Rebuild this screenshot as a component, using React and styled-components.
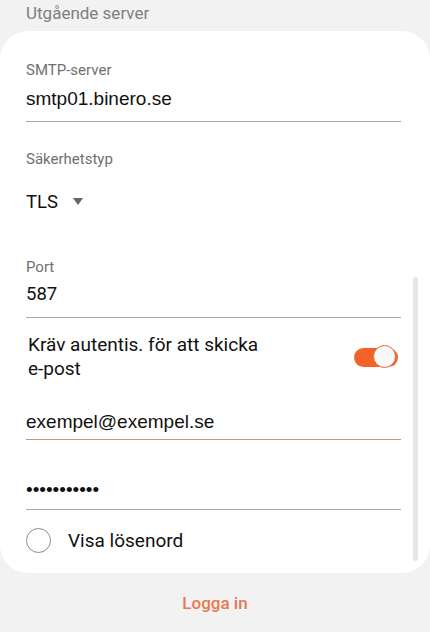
import React, { useState } from 'react';
import styled, { createGlobalStyle } from 'styled-components';

const GlobalStyle = createGlobalStyle`
    html, body {
        margin: 0;
        padding: 0;
        background: #f2f2f2;
    }
    body {
        font-family: Roboto, "Liberation Sans", sans-serif;
        -webkit-font-smoothing: antialiased;
    }
`;

const Page = styled.div`
    width: 430px;
    height: 632px;
    padding-top: 3px;
    box-sizing: border-box;
    background: #f2f2f2;
    overflow: hidden;
`;

const SectionTitle = styled.div`
    padding-left: 26px;
    font-size: 17px;
    line-height: 20px;
    color: #7f7f7f;
`;

const Card = styled.div`
    position: relative;
    margin-top: 8px;
    background: #fff;
    border-radius: 28px;
    padding: 29px 29px 20px 26px;
`;

const Label = styled.div`
    font-size: 15px;
    line-height: 20px;
    color: #707070;
    margin-top: ${({ top }) => top || 0}px;
`;

const Field = styled.div`
    margin-top: ${({ top }) => top || 0}px;
    padding-bottom: ${({ bottom }) => bottom || 0}px;
    border-bottom: 1px solid ${({ focused }) => (focused ? '#c4957a' : '#a8a8a8')};
    font-family: ${({ arial }) => (arial ? '"Liberation Sans", Arial, sans-serif' : 'Roboto, sans-serif')};
    font-size: ${({ arial }) => (arial ? '19px' : '18.5px')};
    line-height: 26px;
    color: #111;
`;

const Select = styled.div`
    margin-top: ${({ top }) => top || 0}px;
    display: flex;
    align-items: center;
    gap: 15px;
    font-size: 18.5px;
    line-height: 26px;
    color: #111;
`;

const SwitchRow = styled.div`
    margin-top: 15px;
    display: flex;
    align-items: center;
    justify-content: space-between;
`;

const SwitchText = styled.div`
    width: 250px;
    font-size: 19px;
    line-height: 24px;
    color: #111;
    padding-left: 2px;
`;

const Track = styled.button`
    position: relative;
    width: 44px;
    height: 19px;
    margin-right: 3px;
    padding: 0;
    border: none;
    border-radius: 10px;
    background: ${({ on }) => (on ? '#f4622a' : '#bdbdbd')};
    cursor: pointer;
`;

const Thumb = styled.span`
    position: absolute;
    top: -3px;
    left: ${({ on }) => (on ? '19px' : '0')};
    width: 23px;
    height: 23px;
    box-sizing: border-box;
    border-radius: 50%;
    background: #f9f9f9;
    border: 1.5px solid ${({ on }) => (on ? '#e5683a' : '#9a9a9a')};
`;

const CheckRow = styled.label`
    margin-top: 18px;
    display: flex;
    align-items: center;
    gap: 17px;
    font-size: 19px;
    line-height: 24px;
    color: #111;
    cursor: pointer;
`;

const Radio = styled.span`
    width: 25px;
    height: 25px;
    box-sizing: border-box;
    border-radius: 50%;
    border: 1px solid #8c8c8c;
    background: ${({ checked }) => (checked ? '#f4622a' : '#fff')};
`;

const Scrollbar = styled.div`
    position: absolute;
    right: 12px;
    top: 246px;
    width: 5px;
    height: 284px;
    border-radius: 3px;
    background: #e6e6e6;
`;

const LoginButton = styled.div`
    margin-top: 20px;
    text-align: center;
    font-size: 17px;
    font-weight: 500;
    line-height: 20px;
    color: #e57a52;
`;

const Caret = () => (
    <svg width="10" height="8" viewBox="0 0 10 8">
        <path d="M0 0 H10 L5 7 Z" fill="#666" />
    </svg>
);

const App = () => {
    const [auth, setAuth] = useState(true);
    const [showPass, setShowPass] = useState(false);

    return (
        <Page>
            <GlobalStyle />
            <SectionTitle>Utgående server</SectionTitle>
            <Card>
                <Label>SMTP-server</Label>
                <Field top={6} bottom={9} arial>smtp01.binero.se</Field>

                <Label top={27}>Säkerhetstyp</Label>
                <Select top={20}>
                    TLS <Caret />
                </Select>

                <Label top={42}>Port</Label>
                <Field top={4} bottom={10}>587</Field>

                <SwitchRow>
                    <SwitchText>Kräv autentis. för att skicka e&#8209;post</SwitchText>
                    <Track on={auth} onClick={() => setAuth(v => !v)}>
                        <Thumb on={auth} />
                    </Track>
                </SwitchRow>

                <Field top={28} bottom={4} arial focused>exempel@exempel.se</Field>
                <Field top={37} bottom={6} arial>
                    {showPass ? 'exempel1234' : '•••••••••••'}
                </Field>

                <CheckRow onClick={() => setShowPass(v => !v)}>
                    <Radio checked={showPass} />
                    Visa lösenord
                </CheckRow>

                <Scrollbar />
            </Card>
            <LoginButton>Logga in</LoginButton>
        </Page>
    );
};

export default App;
